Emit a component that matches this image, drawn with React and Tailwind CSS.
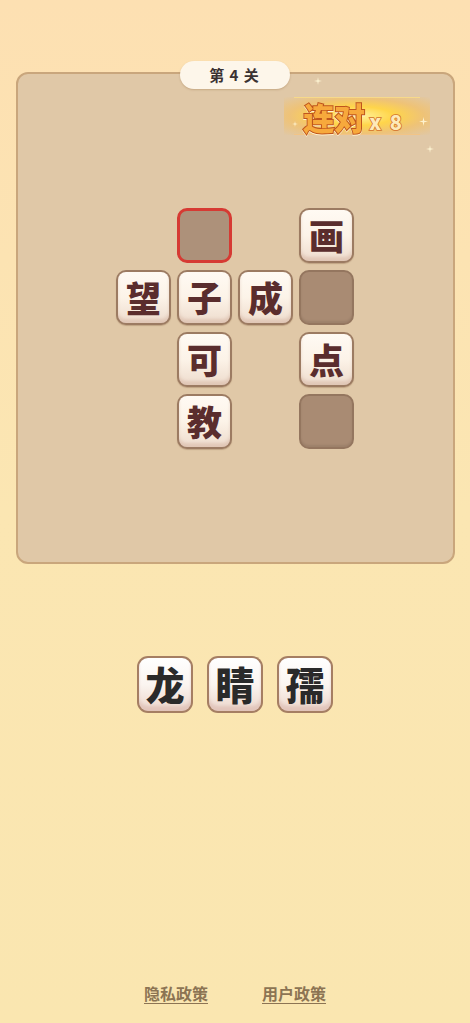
import React from "react";

const F = { fontFamily: '"Noto Sans CJK SC", "Noto Sans", sans-serif' };

function Tile({ ch }) {
  return (
    <div className="w-[55px] h-[55px] rounded-[10px] bg-[#9c7b62] p-[2px] shadow-[0_1px_1px_rgba(120,80,50,0.3)]">
      <div className="w-full h-full rounded-[8px] bg-gradient-to-b from-[#fffaf3] via-[#fcf3e8] to-[#eedccd] flex items-center justify-center shadow-[inset_0_-4px_3px_rgba(200,160,140,0.35)]">
        <span className="text-[35px] leading-none font-black text-[#5a2d2d] -mt-[2px]" style={F}>{ch}</span>
      </div>
    </div>
  );
}

function Empty({ red }) {
  return (
    <div
      className={
        red
          ? "w-[55px] h-[55px] rounded-[10px] bg-[#ad917a] border-[3px] border-[#d63a33]"
          : "w-[55px] h-[55px] rounded-[10px] bg-[#a98b73] border-2 border-[#94765f] shadow-[inset_0_-2px_2px_rgba(0,0,0,0.08)]"
      }
    />
  );
}

function Blank() {
  return <div className="w-[55px] h-[55px]" />;
}

function Choice({ ch }) {
  return (
    <div className="w-[56px] h-[57px] rounded-[11px] bg-[#a57e63] p-[2px]">
      <div className="w-full h-full rounded-[9px] bg-gradient-to-b from-[#ffffff] via-[#fbf5f0] to-[#ecd6cb] flex items-center justify-center shadow-[inset_0_-5px_3px_rgba(210,170,160,0.4)]">
        <span className="text-[39px] leading-none font-black text-[#2a2a2a] -mt-[3px]" style={F}>{ch}</span>
      </div>
    </div>
  );
}

function Sparkle({ className }) {
  return (
    <svg className={className} viewBox="0 0 10 10" width="10" height="10">
      <path d="M5 0 L5.8 4.2 L10 5 L5.8 5.8 L5 10 L4.2 5.8 L0 5 L4.2 4.2 Z" fill="#fff7d6" opacity="0.9" />
    </svg>
  );
}

export default function App() {
  return (
    <div className="w-[470px] h-[1023px] bg-gradient-to-b from-[#fde0b2] via-[#fbe6b2] to-[#fae6b0] flex flex-col items-center" style={F}>
      <div className="h-[72px]" />
      <div className="relative w-[439px] h-[492px] rounded-[12px] bg-[#e0c8a7] border-2 border-[#c9a67c] flex flex-col items-center">
        {/* level pill */}
        <div className="absolute -top-[13px] left-[162px] w-[110px] h-[28px] rounded-full bg-[#fdf6ea] shadow-[0_1px_2px_rgba(150,110,70,0.35)] flex items-center justify-center">
          <span className="text-[15px] font-bold text-[#3b3232] tracking-[1px]">第 4 关</span>
        </div>
        {/* combo badge */}
        <div className="absolute top-[19px] left-[266px] w-[146px] h-[46px] flex items-center justify-center">
          <div className="absolute inset-x-0 top-[4px] bottom-[4px] bg-[radial-gradient(ellipse_at_center,_#fff3a0_0%,_#ffd54a_35%,_rgba(250,190,80,0.55)_65%,_rgba(240,190,120,0)_100%)]" />
          <div className="absolute left-[10px] right-[10px] top-[4px] h-[1px] bg-[#f7d98a]" />
          <div className="absolute left-[10px] right-[10px] bottom-[4px] h-[1px] bg-[#f2c486]" />
          <div className="relative flex items-baseline gap-[4px] -ml-[6px]">
            <span className="text-[31px] leading-none font-black text-[#f7a93c] [-webkit-text-stroke:2px_#bf551d] [paint-order:stroke_fill] drop-shadow-[0_1px_0_#fff3d0]">连对</span>
            <span className="text-[20px] leading-none font-black text-[#fde9b8] [-webkit-text-stroke:1.5px_#d3702a] [paint-order:stroke_fill] tracking-[2px]">x 8</span>
          </div>
          <Sparkle className="absolute -top-[16px] left-[30px] w-[8px] h-[8px]" />
          <Sparkle className="absolute top-[24px] right-[2px] w-[9px] h-[9px]" />
          <Sparkle className="absolute -bottom-[14px] right-[-4px] w-[8px] h-[8px]" />
          <Sparkle className="absolute top-[28px] left-[8px] w-[6px] h-[6px]" />
        </div>

        <div className="mt-[134px] grid grid-cols-[repeat(4,55px)] gap-x-[6px] gap-y-[7px]">
          <Blank /><Empty red /><Blank /><Tile ch="画" />
          <Tile ch="望" /><Tile ch="子" /><Tile ch="成" /><Empty />
          <Blank /><Tile ch="可" /><Blank /><Tile ch="点" />
          <Blank /><Tile ch="教" /><Blank /><Empty />
        </div>
      </div>

      <div className="mt-[92px] flex gap-[14px]">
        <Choice ch="龙" />
        <Choice ch="睛" />
        <Choice ch="孺" />
      </div>

      <div className="mt-[268px] flex gap-[54px]">
        <span className="text-[16px] font-bold text-[#8c7453] underline underline-offset-[3px]">隐私政策</span>
        <span className="text-[16px] font-bold text-[#8c7453] underline underline-offset-[3px]">用户政策</span>
      </div>
    </div>
  );
}
